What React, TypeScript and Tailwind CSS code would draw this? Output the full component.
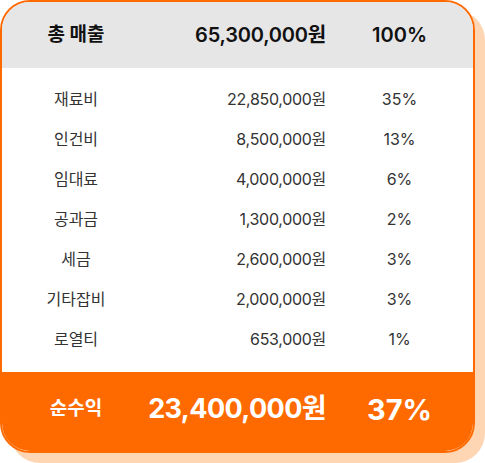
const rows = [
  { label: '재료비', amount: '22,850,000원', pct: '35%' },
  { label: '인건비', amount: '8,500,000원', pct: '13%' },
  { label: '임대료', amount: '4,000,000원', pct: '6%' },
  { label: '공과금', amount: '1,300,000원', pct: '2%' },
  { label: '세금', amount: '2,600,000원', pct: '3%' },
  { label: '기타잡비', amount: '2,000,000원', pct: '3%' },
  { label: '로열티', amount: '653,000원', pct: '1%' },
]

const cols = 'grid grid-cols-[148px_176px_147px] items-center whitespace-nowrap'

export default function App() {
  return (
    <div
      className="w-[485px] h-[463px] bg-white"
      style={{ fontFamily: 'Inter, "Noto Sans CJK KR", sans-serif' }}
    >
      <div className="w-[475px] h-[453px] rounded-[30px] shadow-[10px_10px_0_0_#ffd6b3]">
        <div className="h-full rounded-[30px] border-2 border-[#ff6a00] bg-white overflow-hidden flex flex-col">
          {/* Header */}
          <div className={`${cols} h-[66px] bg-[#e6e6e6] text-[#111]`}>
            <div className="text-center text-[19px] font-bold">총 매출</div>
            <div className="text-right text-[20px] font-semibold tracking-[-0.2px]">65,300,000원</div>
            <div className="text-center text-[20px] font-semibold">100%</div>
          </div>

          {/* Body */}
          <div className="flex-1 pt-[11px] text-[#333] text-[16px]">
            {rows.map((r) => (
              <div key={r.label} className={`${cols} h-[40px]`}>
                <div className="text-center">{r.label}</div>
                <div className="text-right tracking-[-0.3px]">{r.amount}</div>
                <div className="text-center">{r.pct}</div>
              </div>
            ))}
          </div>

          {/* Footer */}
          <div className={`${cols} h-[79px] bg-[#ff6a00] text-white pb-[4px]`}>
            <div className="text-center text-[19px] font-bold">순수익</div>
            <div className="flex justify-end text-[27px] font-bold tracking-[-0.6px]">23,400,000원</div>
            <div className="text-center text-[29px] font-bold">37%</div>
          </div>
        </div>
      </div>
    </div>
  )
}
